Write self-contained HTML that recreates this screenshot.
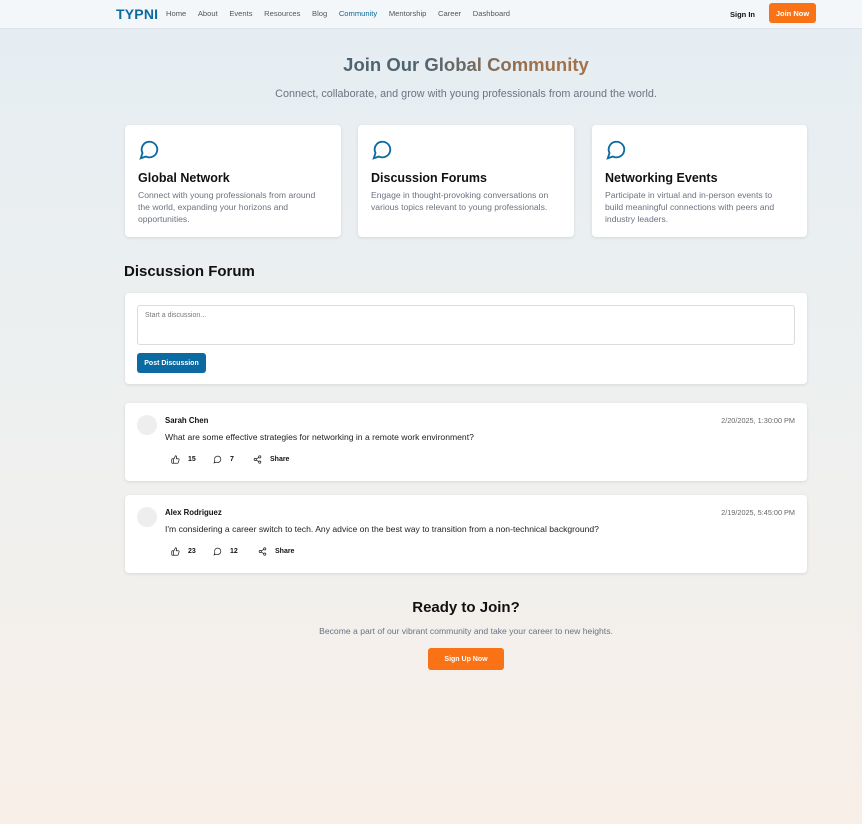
<!DOCTYPE html>
<html><head><meta charset="utf-8"><style>
*{box-sizing:border-box;margin:0;padding:0}
body{width:862px;height:824px;overflow:hidden;font-family:"Liberation Sans",sans-serif;background:linear-gradient(180deg,#e5edf2 0%,#eef0f0 50%,#f8efe8 100%);color:#111}
.nav{height:29px;background:#f4f7f9;border-bottom:1px solid #dde3e8;position:relative}
.logo{position:absolute;left:116px;top:6px;font-weight:bold;font-size:14px;color:#0b6aa2;letter-spacing:.2px}
.links{position:absolute;left:166px;top:9px;font-size:7.6px;color:#555;white-space:nowrap}
.links span{margin-right:11.6px}
.links .a{color:#0b6aa2}
.signin{position:absolute;left:730px;top:10px;font-size:7.5px;font-weight:bold}
.fl{display:flex;align-items:center;justify-content:center}
.join{position:absolute;left:769px;top:3px;width:47px;height:20px;background:#f97316;color:#fff;font-size:7.5px;font-weight:bold;border-radius:3px}
h1{position:absolute;left:35px;width:862px;top:54px;text-align:center;font-size:18.5px;font-weight:bold;background:linear-gradient(90deg,#4f6470 45%,#a0714a 58%);-webkit-background-clip:text;color:transparent}
.sub{position:absolute;top:88px;left:35px;width:862px;text-align:center;font-size:10.8px;color:#6b7580}
.card{position:absolute;background:#fff;border-radius:4px;box-shadow:0 1px 3px rgba(0,0,0,.1)}
.card h3{position:absolute;left:13px;top:46px;font-size:12.5px}
.card p{position:absolute;left:13px;top:64px;right:22px;font-size:8.6px;line-height:12px;color:#6b7280}
.card svg.ic{position:absolute;left:13px;top:14px}
h2{position:absolute;left:124px;top:263px;font-size:15px}
.ta{position:absolute;left:137px;top:305px;width:658px;height:40px;border:1px solid #d8dde2;border-radius:3px;font-size:7px;color:#777;padding:6px 7px}
.btn{position:absolute;background:#0b6aa2;color:#fff;font-size:7px;font-weight:bold;border-radius:3px}
.av{position:absolute;left:12px;top:12px;width:20px;height:20px;border-radius:50%;background:#eee}
.nm{position:absolute;left:40px;top:13px;font-size:7.8px;font-weight:bold}
.tx{position:absolute;left:40px;top:29px;font-size:8.6px;color:#222;white-space:nowrap}
.dt{position:absolute;right:12px;top:13px;font-size:7.3px;color:#666}
.ac{position:absolute;left:46px;top:52px;font-size:7px;font-weight:bold}
.ac span{position:absolute;white-space:nowrap;display:flex;align-items:center;gap:8px}
</style></head><body>
<div class="nav"><div class="logo">TYPNI</div>
<div class="links"><span>Home</span><span>About</span><span>Events</span><span>Resources</span><span>Blog</span><span class="a">Community</span><span>Mentorship</span><span>Career</span><span>Dashboard</span></div>
<div class="signin">Sign In</div><div class="join fl">Join Now</div></div>
<h1>Join Our Global Community</h1>
<div class="sub">Connect, collaborate, and grow with young professionals from around the world.</div>
<div class="card" style="left:125px;top:125px;width:216px;height:112px"><svg class="ic" width="22" height="22" viewBox="0 0 24 24" fill="none" stroke="#0b6aa2" stroke-width="2"><path d="M3 21l1.9-5.7A8.5 8.5 0 1 1 8.7 19.1z"/></svg><h3>Global Network</h3><p>Connect with young professionals from around the world, expanding your horizons and opportunities.</p></div>
<div class="card" style="left:358px;top:125px;width:216px;height:112px"><svg class="ic" width="22" height="22" viewBox="0 0 24 24" fill="none" stroke="#0b6aa2" stroke-width="2"><path d="M3 21l1.9-5.7A8.5 8.5 0 1 1 8.7 19.1z"/></svg><h3>Discussion Forums</h3><p>Engage in thought-provoking conversations on various topics relevant to young professionals.</p></div>
<div class="card" style="left:592px;top:125px;width:215px;height:112px"><svg class="ic" width="22" height="22" viewBox="0 0 24 24" fill="none" stroke="#0b6aa2" stroke-width="2"><path d="M3 21l1.9-5.7A8.5 8.5 0 1 1 8.7 19.1z"/></svg><h3>Networking Events</h3><p>Participate in virtual and in-person events to build meaningful connections with peers and industry leaders.</p></div>
<h2>Discussion Forum</h2>
<div class="card" style="left:125px;top:293px;width:682px;height:91px"></div>
<div class="ta">Start a discussion...</div>
<div class="btn fl" style="left:137px;top:353px;width:69px;height:20px">Post Discussion</div>
<div class="card" style="left:125px;top:403px;width:682px;height:78px"><div class="av"></div><div class="nm">Sarah Chen</div><div class="tx">What are some effective strategies for networking in a remote work environment?</div><div class="dt">2/20/2025, 1:30:00 PM</div><div class="ac">
<span style="left:0"><svg width="9" height="9" viewBox="0 0 24 24" fill="none" stroke="#222" stroke-width="2"><path d="M7 10v12M15 5.9L14 10h5.8a2 2 0 0 1 1.9 2.5l-2.3 8A2 2 0 0 1 17.5 22H4a2 2 0 0 1-2-2v-8a2 2 0 0 1 2-2h2.8a2 2 0 0 0 1.8-1.1L12 2a3 3 0 0 1 3 3.9z"/></svg>15</span>
<span style="left:42px"><svg width="9" height="9" viewBox="0 0 24 24" fill="none" stroke="#222" stroke-width="2"><path d="M3 21l1.9-5.7A8.5 8.5 0 1 1 8.7 19.1z"/></svg>7</span>
<span style="left:82px"><svg width="9" height="9" viewBox="0 0 24 24" fill="none" stroke="#222" stroke-width="2"><circle cx="18" cy="5" r="3"/><circle cx="6" cy="12" r="3"/><circle cx="18" cy="19" r="3"/><path d="M8.6 13.5l6.8 4M15.4 6.5l-6.8 4"/></svg>Share</span></div></div>
<div class="card" style="left:125px;top:495px;width:682px;height:78px"><div class="av"></div><div class="nm">Alex Rodriguez</div><div class="tx">I'm considering a career switch to tech. Any advice on the best way to transition from a non-technical background?</div><div class="dt">2/19/2025, 5:45:00 PM</div><div class="ac">
<span style="left:0"><svg width="9" height="9" viewBox="0 0 24 24" fill="none" stroke="#222" stroke-width="2"><path d="M7 10v12M15 5.9L14 10h5.8a2 2 0 0 1 1.9 2.5l-2.3 8A2 2 0 0 1 17.5 22H4a2 2 0 0 1-2-2v-8a2 2 0 0 1 2-2h2.8a2 2 0 0 0 1.8-1.1L12 2a3 3 0 0 1 3 3.9z"/></svg>23</span>
<span style="left:42px"><svg width="9" height="9" viewBox="0 0 24 24" fill="none" stroke="#222" stroke-width="2"><path d="M3 21l1.9-5.7A8.5 8.5 0 1 1 8.7 19.1z"/></svg>12</span>
<span style="left:87px"><svg width="9" height="9" viewBox="0 0 24 24" fill="none" stroke="#222" stroke-width="2"><circle cx="18" cy="5" r="3"/><circle cx="6" cy="12" r="3"/><circle cx="18" cy="19" r="3"/><path d="M8.6 13.5l6.8 4M15.4 6.5l-6.8 4"/></svg>Share</span></div></div>
<div style="position:absolute;top:599px;width:862px;text-align:center;font-size:15px;font-weight:bold;left:35px">Ready to Join?</div>
<div style="position:absolute;top:626px;width:862px;text-align:center;font-size:8.6px;color:#6b7280;left:35px">Become a part of our vibrant community and take your career to new heights.</div>
<div class="btn fl" style="left:428px;top:648px;width:76px;height:22px;background:#f97316">Sign Up Now</div>
</body></html>
